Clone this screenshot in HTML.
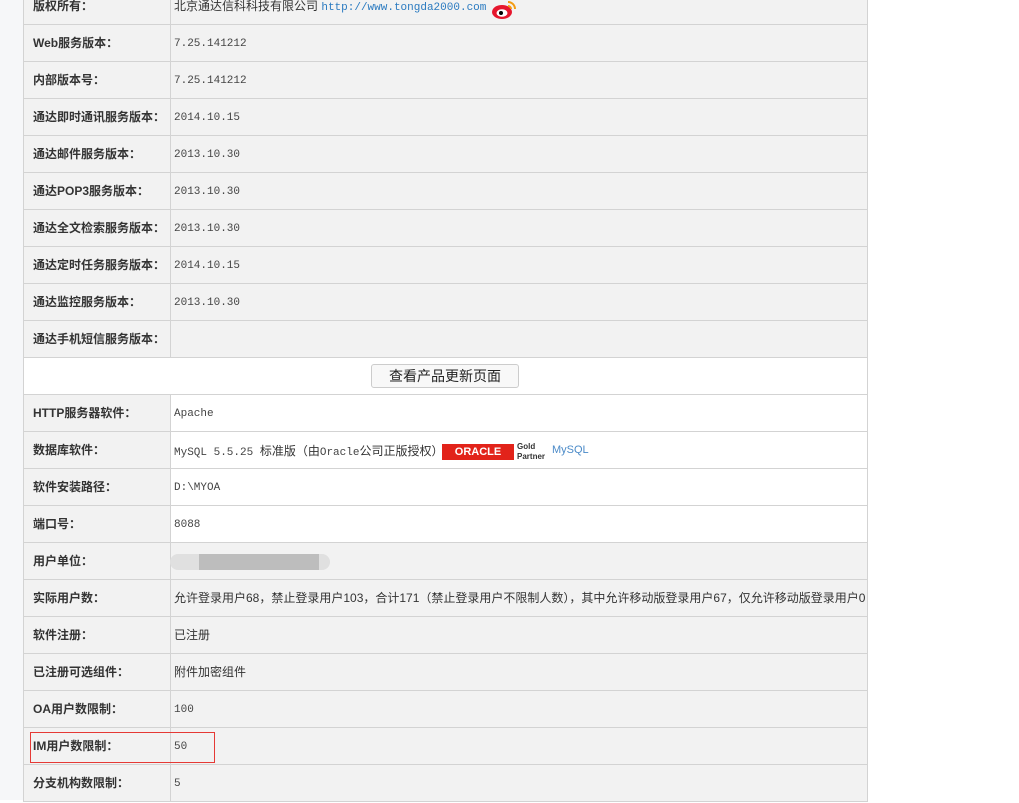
<!DOCTYPE html>
<html><head><meta charset="utf-8"><style>
*{margin:0;padding:0;box-sizing:border-box}
body{width:1019px;height:800px;overflow:hidden;background:#fff;position:relative;font-family:"Liberation Sans","Noto Sans CJK SC",sans-serif;color:#333}
#lb{position:absolute;left:0;top:0;width:23px;height:800px;background:#f6f7f9}
.r{position:absolute;left:23px;width:845px;height:38px;border:1px solid #d3d3d3;background:#f2f2f2}
.l{position:absolute;left:0;top:0;width:147px;height:36px;border-right:1px solid #d3d3d3;font-weight:bold;font-size:12px;line-height:37px;padding-left:9px;color:#333;background:#f2f2f2}
.v{position:absolute;left:150px;top:0;height:36px;line-height:37px;font-size:12px;white-space:nowrap}
.m{font-family:"Liberation Mono","Noto Sans CJK SC",monospace;font-size:11px;color:#444;line-height:38px}
.w{background:#fff}
</style></head><body>
<div id="lb"></div>
<div class="r" style="top:-13px"><div class="l">版权所有：</div><div class="v">北京通达信科科技有限公司 <span class="m" style="color:#2a7ac0;line-height:36px">http://www.tongda2000.com</span>
<svg style="position:absolute;left:318px;top:12px" width="26" height="20" viewBox="0 0 26 20"><ellipse cx="10" cy="12" rx="10" ry="7" fill="#e6162d"/><ellipse cx="10" cy="13" rx="5.5" ry="3.8" fill="#fff"/><circle cx="9" cy="13" r="2" fill="#000"/><path d="M16 2a7 7 0 0 1 7 7" stroke="#f39c12" stroke-width="2" fill="none"/><path d="M16 6a3 3 0 0 1 3 3" stroke="#f39c12" stroke-width="2" fill="none"/></svg></div></div>
<div class="r" style="top:24px"><div class="l">Web服务版本：</div><div class="v m">7.25.141212</div></div>
<div class="r" style="top:61px"><div class="l">内部版本号：</div><div class="v m">7.25.141212</div></div>
<div class="r" style="top:98px"><div class="l">通达即时通讯服务版本：</div><div class="v m">2014.10.15</div></div>
<div class="r" style="top:135px"><div class="l">通达邮件服务版本：</div><div class="v m">2013.10.30</div></div>
<div class="r" style="top:172px"><div class="l">通达POP3服务版本：</div><div class="v m">2013.10.30</div></div>
<div class="r" style="top:209px"><div class="l">通达全文检索服务版本：</div><div class="v m">2013.10.30</div></div>
<div class="r" style="top:246px"><div class="l">通达定时任务服务版本：</div><div class="v m">2014.10.15</div></div>
<div class="r" style="top:283px"><div class="l">通达监控服务版本：</div><div class="v m">2013.10.30</div></div>
<div class="r" style="top:320px"><div class="l">通达手机短信服务版本：</div><div class="v"></div></div>
<div class="r w" style="top:357px"><div style="position:absolute;left:347px;top:6px;width:148px;height:24px;border:1px solid #ccc;border-radius:3px;background:#f8f8f8;font-size:14px;line-height:22px;text-align:center;color:#222">查看产品更新页面</div></div>
<div class="r w" style="top:394px"><div class="l">HTTP服务器软件：</div><div class="v m">Apache</div></div>
<div class="r w" style="top:431px"><div class="l">数据库软件：</div><div class="v m">MySQL 5.5.25 <span style="font-family:'Noto Sans CJK SC',sans-serif;font-size:12px;color:#333">标准版（由</span>Oracle<span style="font-family:'Noto Sans CJK SC',sans-serif;font-size:12px;color:#333">公司正版授权）</span>
<span style="position:absolute;left:268px;top:12px;width:72px;height:16px;background:#e2231a;color:#fff;font-size:11px;font-weight:bold;line-height:16px;text-align:center;font-family:'Liberation Sans',sans-serif">ORACLE</span>
<span style="position:absolute;left:343px;top:10px;font-size:8px;line-height:10px;font-weight:bold;color:#333;font-family:'Liberation Sans',sans-serif">Gold<br>Partner</span>
<span style="position:absolute;left:378px;top:8px;font-size:11px;line-height:20px;color:#4a8ac8;font-family:'Liberation Sans',sans-serif">MySQL</span></div></div>
<div class="r w" style="top:468px"><div class="l">软件安装路径：</div><div class="v m">D:\MYOA</div></div>
<div class="r w" style="top:505px"><div class="l">端口号：</div><div class="v m">8088</div></div>
<div class="r" style="top:542px"><div class="l">用户单位：</div><div class="v"><div style="position:absolute;left:-4px;top:11px;width:160px;height:16px;background:#e0e0e0;border-radius:8px"></div><div style="position:absolute;left:25px;top:11px;width:120px;height:16px;background:#bdbdbd"></div></div></div>
<div class="r" style="top:579px"><div class="l">实际用户数：</div><div class="v">允许登录用户68，禁止登录用户103，合计171（禁止登录用户不限制人数），其中允许移动版登录用户67，仅允许移动版登录用户0</div></div>
<div class="r" style="top:616px"><div class="l">软件注册：</div><div class="v">已注册</div></div>
<div class="r" style="top:653px"><div class="l">已注册可选组件：</div><div class="v">附件加密组件</div></div>
<div class="r" style="top:690px"><div class="l">OA用户数限制：</div><div class="v m">100</div></div>
<div class="r" style="top:727px"><div class="l">IM用户数限制：</div><div class="v m">50</div></div>
<div class="r" style="top:764px"><div class="l">分支机构数限制：</div><div class="v m">5</div></div>
<div style="position:absolute;left:30px;top:732px;width:185px;height:31px;border:1px solid #e53935"></div>
</body></html>
